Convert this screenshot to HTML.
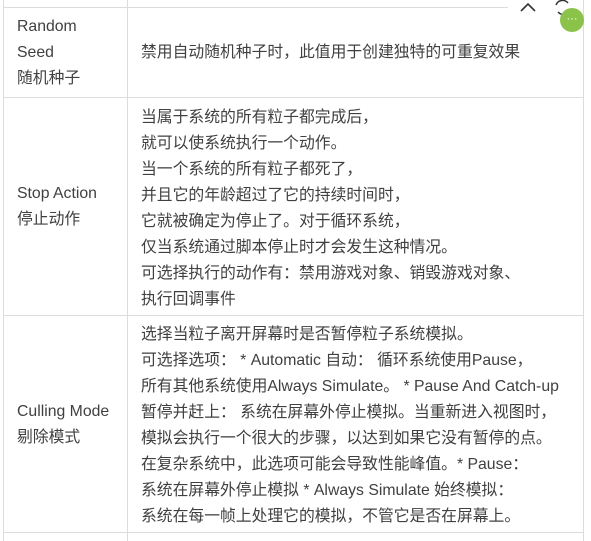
<!DOCTYPE html>
<html><head><meta charset="utf-8"><style>
body{margin:0;width:591px;height:541px;background:#fff;overflow:hidden;position:relative;font-family:"Liberation Sans","Noto Sans CJK SC",sans-serif;font-size:15.8px;color:#404040}
.h{position:absolute;height:1px;background:#dcdcdc}
.v{position:absolute;width:1px;background:#dcdcdc}
.t{position:absolute;line-height:26px;white-space:nowrap}
</style></head><body>
<div class="h" style="left:3px;top:7px;width:505px"></div>
<div class="h" style="left:3px;top:97px;width:581px"></div>
<div class="h" style="left:3px;top:315px;width:581px"></div>
<div class="h" style="left:3px;top:532px;width:581px"></div>
<div class="v" style="left:3px;top:0;height:541px"></div>
<div class="v" style="left:127px;top:0;height:541px"></div>
<div class="v" style="left:583px;top:0;height:541px"></div>

<div class="t" style="left:17px;top:14px">Random<br>Seed<br>随机种子</div>
<div class="t" style="left:141px;top:40px">禁用自动随机种子时，此值用于创建独特的可重复效果</div>

<div class="t" style="left:17px;top:181px">Stop Action<br>停止动作</div>
<div class="t" style="left:141px;top:105px">当属于系统的所有粒子都完成后，<br>就可以使系统执行一个动作。<br>当一个系统的所有粒子都死了，<br>并且它的年龄超过了它的持续时间时，<br>它就被确定为停止了。对于循环系统，<br>仅当系统通过脚本停止时才会发生这种情况。<br>可选择执行的动作有：禁用游戏对象、销毁游戏对象、<br>执行回调事件</div>

<div class="t" style="left:17px;top:399px">Culling Mode<br>剔除模式</div>
<div class="t" style="left:141px;top:322px">选择当粒子离开屏幕时是否暂停粒子系统模拟。<br>可选择选项： * Automatic 自动： 循环系统使用Pause，<br>所有其他系统使用Always Simulate。 * Pause And Catch-up<br>暂停并赶上： 系统在屏幕外停止模拟。当重新进入视图时，<br>模拟会执行一个很大的步骤，以达到如果它没有暂停的点。<br>在复杂系统中，此选项可能会导致性能峰值。* Pause：<br>系统在屏幕外停止模拟 * Always Simulate 始终模拟：<br>系统在每一帧上处理它的模拟，不管它是否在屏幕上。</div>

<svg style="position:absolute;left:518px;top:0" width="20" height="14"><path d="M3 11 L10 4 L17 11" stroke="#333" stroke-width="1.6" fill="none"/></svg>
<svg style="position:absolute;left:553px;top:0" width="20" height="16"><path d="M3 5 A7 7 0 0 1 15 3 M17 9 A7 7 0 0 1 5 12" stroke="#333" stroke-width="1.5" fill="none"/></svg>
<div style="position:absolute;left:560px;top:8px;width:24px;height:24px;border-radius:50%;background:#8bc34a;color:#fff;font-size:11px;line-height:22px;text-align:center">···</div>
</body></html>
